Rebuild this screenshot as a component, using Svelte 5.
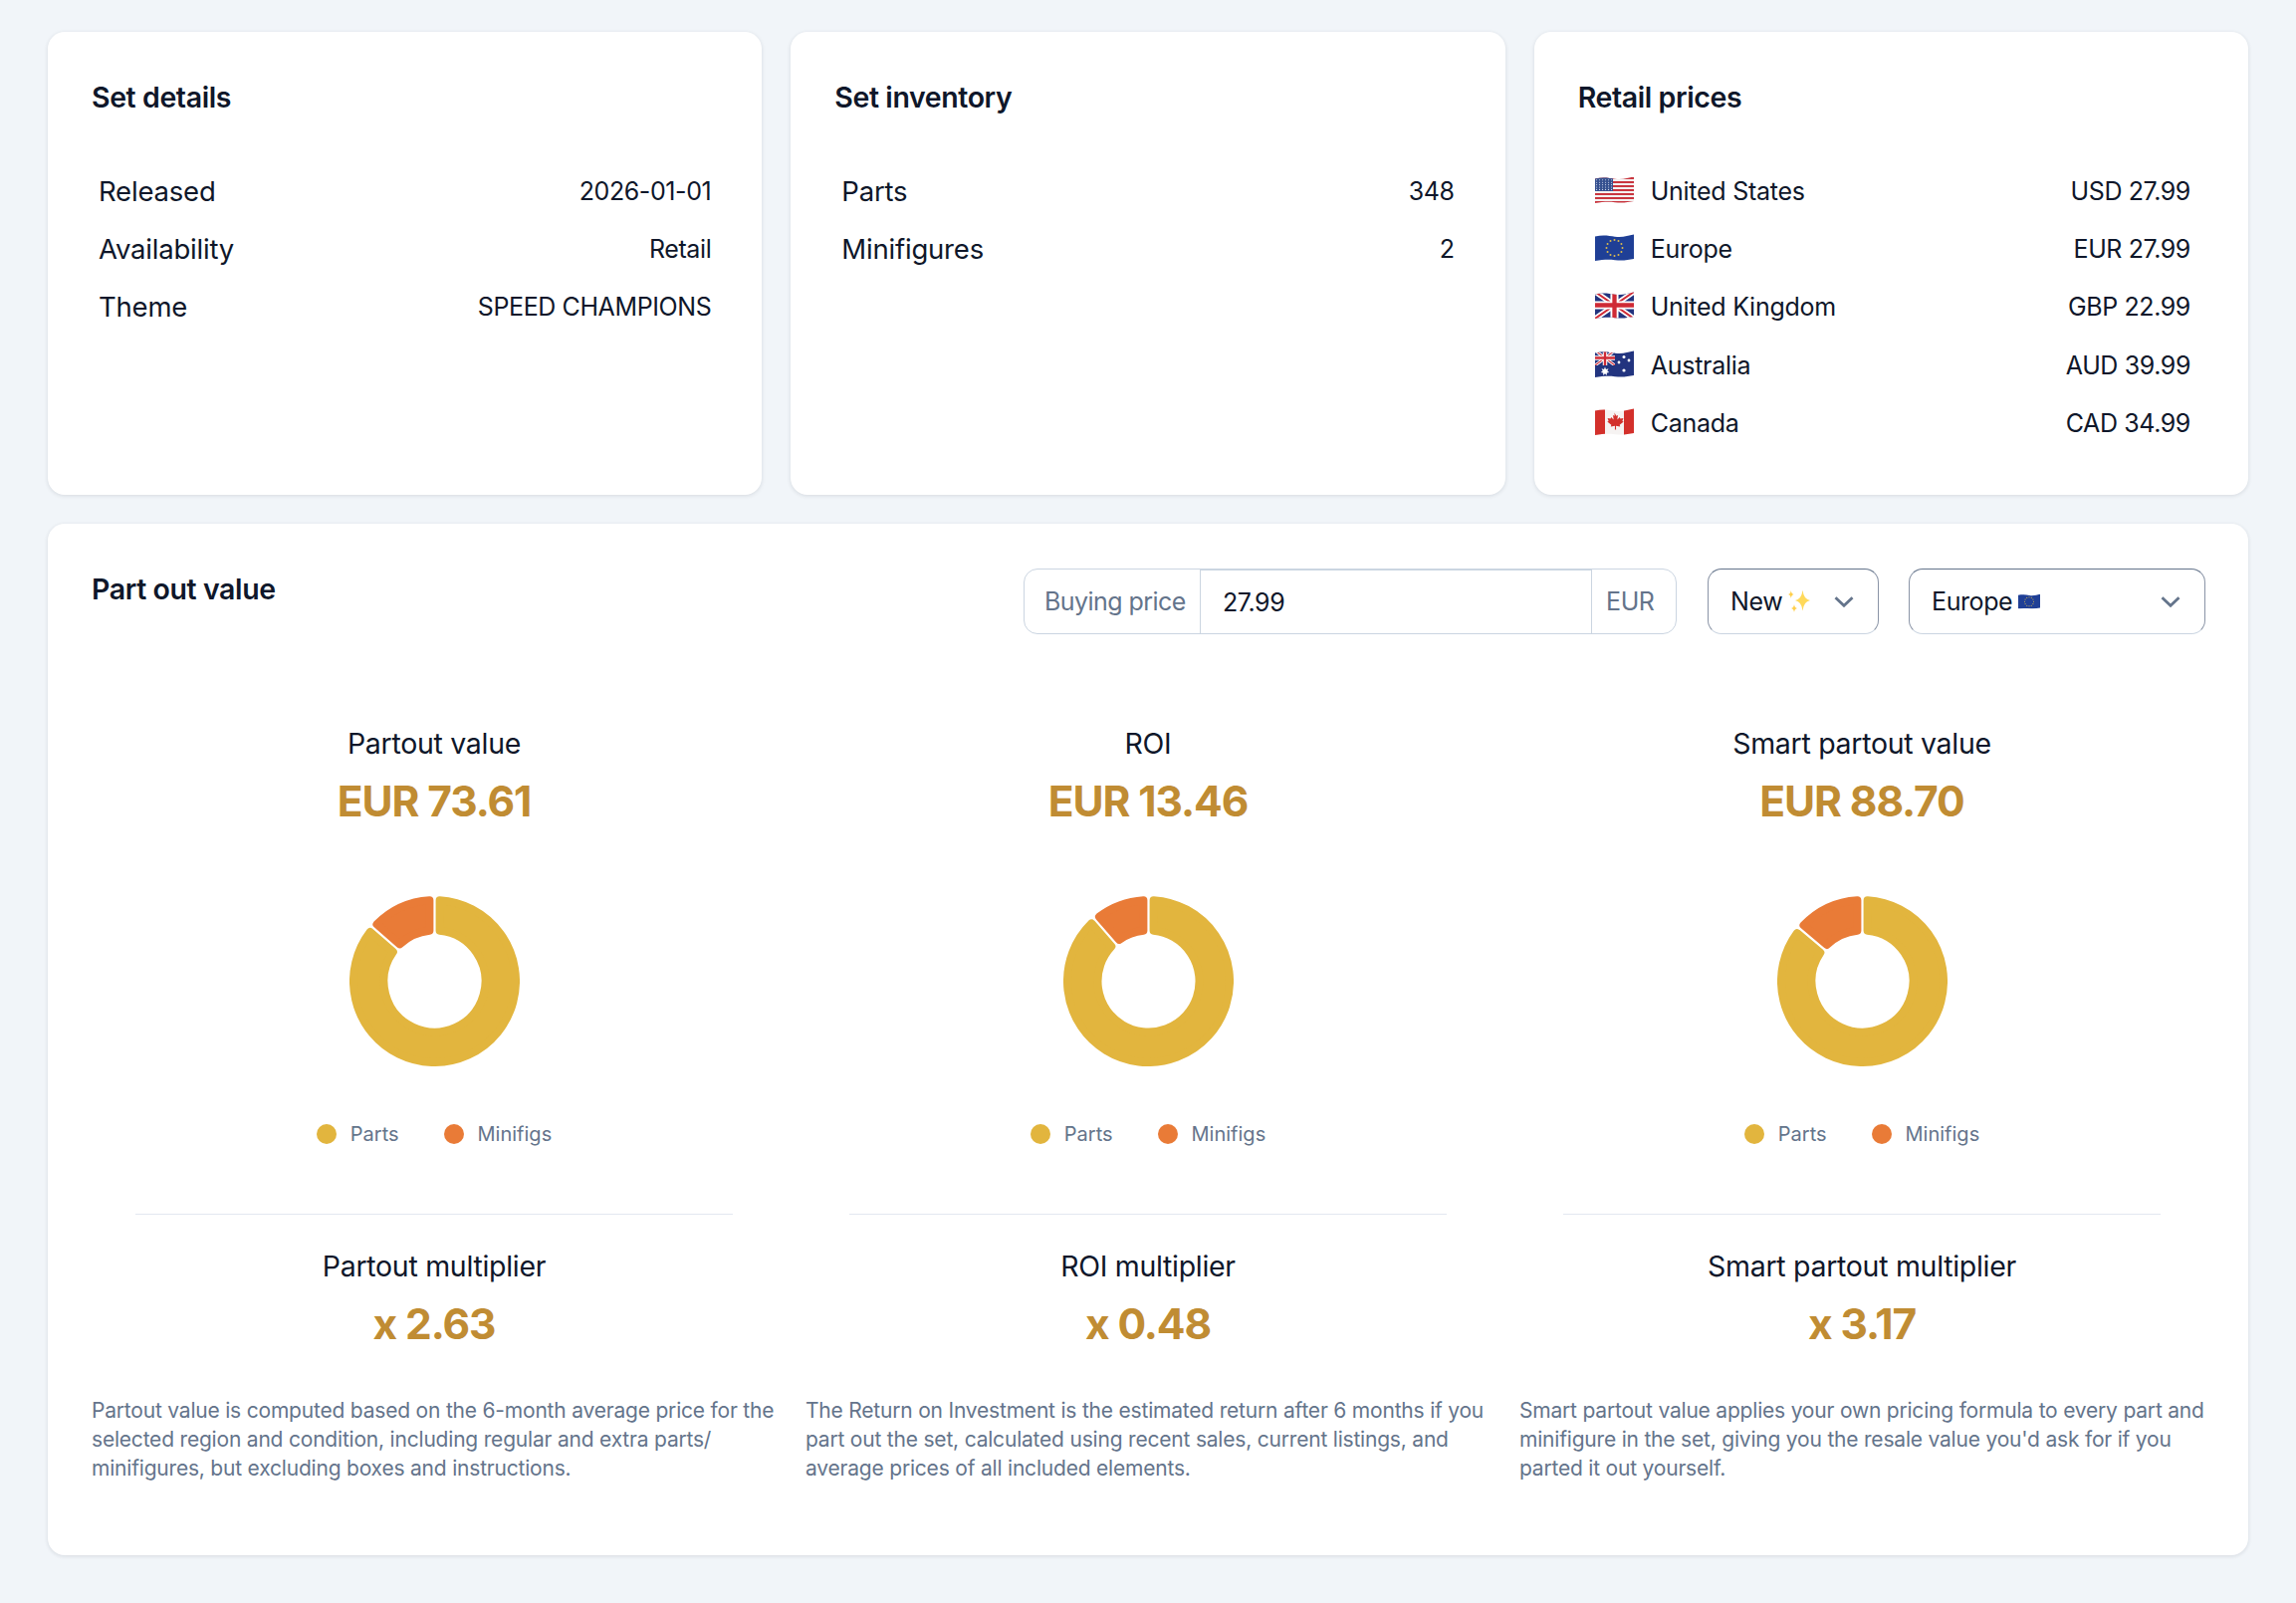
<script>
  const C = 85.5, R = 85.5, r = 47;
  function pt(rad, deg) {
    const a = (deg * Math.PI) / 180;
    return `${(C + rad * Math.sin(a)).toFixed(2)} ${(C - rad * Math.cos(a)).toFixed(2)}`;
  }
  // Sector from a0 to a1 (clockwise degrees from 12 o'clock), inset so that a round stroke restores its size and rounds its corners
  const radial = 4, side = 5.1;
  function sector(a0, a1) {
    const o = R - radial, i = r + radial;
    const d0o = a0 + (side / o) * 57.3, d1o = a1 - (side / o) * 57.3;
    const d0i = a0 + (side / i) * 57.3, d1i = a1 - (side / i) * 57.3;
    const large = a1 - a0 > 180 ? 1 : 0;
    return `M${pt(o, d0o)} A${o} ${o} 0 ${large} 1 ${pt(o, d1o)} L${pt(i, d1i)} A${i} ${i} 0 ${large} 0 ${pt(i, d0i)} Z`;
  }
  function star(cx, cy, rx, ry) {
    const kx = rx * 0.12, ky = ry * 0.12;
    return `M${cx} ${cy - ry}Q${cx + kx} ${cy - ky} ${cx + rx} ${cy}Q${cx + kx} ${cy + ky} ${cx} ${cy + ry}Q${cx - kx} ${cy + ky} ${cx - rx} ${cy}Q${cx - kx} ${cy - ky} ${cx} ${cy - ry}Z`;
  }
  const cols = [
    { title: 'Partout value', value: 'EUR 73.61', wedge: 49, mtitle: 'Partout multiplier', mvalue: 'x 2.63',
      desc: 'Partout value is computed based on the 6-month average price for the selected region and condition, including regular and extra parts/ minifigures, but excluding boxes and instructions.' },
    { title: 'ROI', value: 'EUR 13.46', wedge: 41, mtitle: 'ROI multiplier', mvalue: 'x 0.48',
      desc: 'The Return on Investment is the estimated return after 6 months if you part out the set, calculated using recent sales, current listings, and average prices of all included elements.' },
    { title: 'Smart partout value', value: 'EUR 88.70', wedge: 50, mtitle: 'Smart partout multiplier', mvalue: 'x 3.17',
      desc: "Smart partout value applies your own pricing formula to every part and minifigure in the set, giving you the resale value you'd ask for if you parted it out yourself." }
  ];
  const details = [['Released', '2026-01-01'], ['Availability', 'Retail'], ['Theme', 'SPEED CHAMPIONS']];
  const inventory = [['Parts', '348'], ['Minifigures', '2']];
  const prices = [
    ['us', 'United States', 'USD 27.99'],
    ['eu', 'Europe', 'EUR 27.99'],
    ['uk', 'United Kingdom', 'GBP 22.99'],
    ['au', 'Australia', 'AUD 39.99'],
    ['ca', 'Canada', 'CAD 34.99']
  ];
  const wave = 'M0 2.500C8 .8 14 1.800 20 2.800 28 4 33 1.500 39 .5V25C33 26 28 27.200 20 26.200 13 25.200 8 25.800 0 27Z';
  const euStars = Array.from({ length: 12 }, (_, i) => {
    const a = (i * Math.PI) / 6;
    return [19.5 + 8 * Math.sin(a), 14 - 8 * Math.cos(a)];
  });
  let uid = 0;
  function nextId() { uid += 1; return `flagclip${uid}`; }
</script>

{#snippet union(w, h)}
  <rect width={w} height={h} fill="#22347f" />
  <path d="M0 0L{w} {h}M{w} 0L0 {h}" stroke="#fff" stroke-width={h * 0.2} />
  <path d="M0 0L{w} {h}M{w} 0L0 {h}" stroke="#cf2a35" stroke-width={h * 0.07} />
  <path d="M{w / 2} 0V{h}M0 {h / 2}H{w}" stroke="#fff" stroke-width={h * 0.3} />
  <path d="M{w / 2} 0V{h}M0 {h / 2}H{w}" stroke="#cf2a35" stroke-width={h * 0.16} />
{/snippet}

{#snippet flag(code, cls)}
  {@const id = nextId()}
  <svg class={cls} viewBox="0 0 39 27" aria-hidden="true">
    <defs><clipPath {id}><path d={wave} /></clipPath></defs>
    <g clip-path="url(#{id})">
      {#if code === 'us'}
        <rect width="39" height="27" fill="#f4f1f1" />
        {#each [0, 1, 2, 3, 4, 5, 6] as s}
          <rect y={1 + s * 4} width="39" height="2" fill="#c9363f" />
        {/each}
        <rect width="18" height="15" fill="#35508f" />
        {#each [0, 1, 2, 3, 4] as row}
          {#each [0, 1, 2, 3, 4, 5] as c}
            <circle cx={1.6 + c * 3} cy={3.8 + row * 2.4} r="0.55" fill="#dfe4f2" />
          {/each}
        {/each}
      {:else if code === 'eu'}
        <rect width="39" height="27" fill="#1f3f96" />
        {#each euStars as s}
          <circle cx={s[0]} cy={s[1]} r="1" fill="#d9b94e" />
        {/each}
      {:else if code === 'uk'}
        {@render union(39, 27)}
      {:else if code === 'au'}
        <rect width="39" height="27" fill="#22347f" />
        <svg width="20" height="15">{@render union(20, 15)}</svg>
        <path d="M10 16.500l1 2.400 2.500-.7-1.200 2.300 2 1.500-2.500.5.1 2.500-1.900-1.700-1.900 1.700.1-2.500-2.500-.5 2-1.500-1.200-2.300 2.500.7z" fill="#fff" />
        <circle cx="29" cy="20" r="1.6" fill="#fff" />
        <circle cx="29" cy="6.500" r="1.500" fill="#fff" />
        <circle cx="24" cy="12" r="1.400" fill="#fff" />
        <circle cx="34" cy="10" r="1.400" fill="#fff" />
      {:else}
        <rect width="39" height="27" fill="#f6f3f2" />
        <rect width="10" height="27" fill="#d3302b" />
        <rect x="29" width="10" height="27" fill="#d3302b" />
        <path d="M19.500 4.500l1.800 3.200 1.700-.8-.7 4.600 2.500-2.600.6 1.600 3-.5-1 3 1.300.6-4 3.200.5 1.600-4.200-.6.100 3.700h-1.200l.1-3.700-4.200.6.5-1.600-4-3.200 1.300-.6-1-3 3 .5.6-1.600 2.500 2.600-.7-4.600 1.700.8z" fill="#d3302b" />
      {/if}
    </g>
  </svg>
{/snippet}

{#snippet chevron()}
  <svg class="chevron" viewBox="0 0 20 11" aria-hidden="true">
    <path d="M1.500 1.300L10 9.300l8.500-8" fill="none" stroke="#64748b" stroke-width="2.800" />
  </svg>
{/snippet}

{#snippet card(title, rows)}
  <section class="card">
    <h2>{title}</h2>
    <div class="rows">
      {#each rows as row}
        <div class="row">
          <span class="label">{row[0]}</span>
          <span class="val">{row[1]}</span>
        </div>
      {/each}
    </div>
  </section>
{/snippet}

<main>
  <div class="top">
    {@render card('Set details', details)}
    {@render card('Set inventory', inventory)}
    <section class="card">
      <h2>Retail prices</h2>
      <div class="rows prices">
        {#each prices as p}
          <div class="row">
            {@render flag(p[0], 'flag')}
            <span class="country">{p[1]}</span>
            <span class="val">{p[2]}</span>
          </div>
        {/each}
      </div>
    </section>
  </div>

  <section class="card partout">
    <header>
      <h2>Part out value</h2>
      <div class="controls">
        <div class="group">
          <span class="addon first">Buying price</span>
          <input value="27.99" aria-label="Buying price" />
          <span class="addon last">EUR</span>
        </div>
        <div class="select new">
          <span class="sel-text">New
            <svg class="sparkles" viewBox="0 0 22 22" aria-hidden="true">
              <path d={star(14.500, 10, 7.500, 10.500)} fill="#ffd95a" />
              <path d={star(2.800, 4, 2.800, 4)} fill="#ffcf4a" />
              <path d={star(6, 18, 3, 4)} fill="#ffcf4a" />
            </svg>
          </span>
          {@render chevron()}
        </div>
        <div class="select region">
          <span class="sel-text">Europe {@render flag('eu', 'miniflag')}</span>
          {@render chevron()}
        </div>
      </div>
    </header>

    <div class="cols">
      {#each cols as col}
        <div class="col">
          <h3>{col.title}</h3>
          <div class="big">{col.value}</div>
          <svg class="donut" viewBox="0 0 171 171" aria-hidden="true">
            <path d={sector(0, 360 - col.wedge)} fill="#e2b53e" stroke="#e2b53e" stroke-width="8" stroke-linejoin="round" />
            <path d={sector(360 - col.wedge, 360)} fill="#e97b37" stroke="#e97b37" stroke-width="8" stroke-linejoin="round" />
          </svg>
          <div class="legend">
            <span class="item"><i class="dot parts"></i>Parts</span>
            <span class="item"><i class="dot figs"></i>Minifigs</span>
          </div>
          <hr />
          <h3>{col.mtitle}</h3>
          <div class="big">{col.mvalue}</div>
          <p>{col.desc}</p>
        </div>
      {/each}
    </div>
  </section>
</main>

<style>
  :global(body) {
    margin: 0;
    background: #f1f5f9;
  }
  main {
    box-sizing: border-box;
    min-height: 1610px;
    padding: 32px 48px 48px;
    display: flex;
    flex-direction: column;
    gap: 29px;
    font-family: Inter, "Noto Sans", sans-serif;
    color: #0f172a;
  }
  .top {
    display: grid;
    grid-template-columns: repeat(3, 1fr);
    gap: 29px;
  }
  .card {
    background: #fff;
    border-radius: 17px;
    box-shadow: 0 1px 4px rgba(15, 23, 42, 0.12);
    padding: 44px;
    box-sizing: border-box;
  }
  .top .card {
    height: 465px;
  }
  h2 {
    margin: 0;
    font-size: 28.5px;
    line-height: 43px;
    font-weight: 600;
    letter-spacing: -0.4px;
  }
  .rows {
    margin-top: 43.5px;
    display: flex;
    flex-direction: column;
  }
  .row {
    height: 58.4px;
    display: flex;
    align-items: center;
    padding: 0 7px;
  }
  .label {
    font-size: 27.5px;
    flex: 1;
    letter-spacing: -0.2px;
  }
  .val {
    font-size: 25px;
    letter-spacing: -0.4px;
  }
  .prices .row {
    padding: 0 14px 0 17px;
  }
  .flag {
    width: 39px;
    height: 27px;
    flex: none;
    margin-bottom: 3px;
    margin-right: 17px;
  }
  .country {
    flex: 1;
    font-size: 25px;
    letter-spacing: -0.25px;
  }
  .partout {
    height: 1036px;
  }
  header {
    display: flex;
    justify-content: space-between;
    align-items: flex-start;
  }
  .controls {
    display: flex;
    gap: 30px;
    margin-top: 1px;
    margin-right: -1px;
    height: 66px;
  }
  .group {
    width: 656px;
    margin-right: 1px;
    display: flex;
    box-sizing: border-box;
    border: 1px solid #cbd5e1;
    border-radius: 14px;
    font-size: 25px;
    letter-spacing: -0.4px;
  }
  .addon {
    display: flex;
    align-items: center;
    color: #64748b;
    box-sizing: border-box;
  }
  .first {
    width: 177px;
    padding-left: 20px;
    border-right: 1px solid #cbd5e1;
    letter-spacing: -0.55px;
  }
  .last {
    width: 85px;
    padding-left: 14px;
    border-left: 1px solid #cbd5e1;
  }
  input {
    flex: 1;
    min-width: 0;
    border: 0;
    border-top: 2px solid #cbd5e1;
    margin-top: -1px;
    outline: none;
    background: transparent;
    padding: 0 22px;
    font: inherit;
    letter-spacing: inherit;
    color: #0f172a;
  }
  .select {
    box-sizing: border-box;
    display: flex;
    align-items: center;
    justify-content: space-between;
    border: 1px solid #8a94a6;
    border-top-color: #64748b;
    border-bottom-color: #cbd5e1;
    border-radius: 14px;
    padding: 0 24px 0 22px;
    font-size: 25px;
    letter-spacing: -0.4px;
  }
  .new {
    width: 172px;
  }
  .region {
    width: 298px;
  }
  .sel-text {
    display: flex;
    align-items: center;
    gap: 6px;
  }
  .sparkles {
    width: 22px;
    height: 22px;
  }
  .miniflag {
    width: 22px;
    height: 16px;
  }
  .chevron {
    width: 20px;
    height: 11px;
    flex: none;
  }
  .cols {
    margin-top: 90px;
    display: grid;
    grid-template-columns: repeat(3, 1fr);
    gap: 29px;
  }
  .col {
    display: flex;
    flex-direction: column;
    align-items: center;
  }
  h3 {
    margin: 0;
    font-size: 28.5px;
    line-height: 40px;
    font-weight: 400;
    letter-spacing: -0.3px;
    color: #0f172a;
  }
  .big {
    margin-top: 8px;
    font-size: 42.5px;
    line-height: 60px;
    font-weight: 650;
    color: #c08c33;
    letter-spacing: -1.1px;
  }
  .donut {
    width: 171px;
    height: 171px;
    margin-top: 65px;
  }
  .legend {
    display: flex;
    gap: 45px;
    margin-top: 53px;
    height: 30px;
    font-size: 20px;
    color: #64748b;
  }
  .item {
    display: flex;
    align-items: center;
    gap: 14px;
  }
  .dot {
    width: 20px;
    height: 20px;
    border-radius: 50%;
  }
  .parts {
    background: #e2b53e;
  }
  .figs {
    background: #e97b37;
  }
  hr {
    width: 600px;
    border: 0;
    border-top: 1px solid #e2e8f0;
    margin: 65px 0 32px;
  }
  p {
    margin: 42px 0 0;
    align-self: stretch;
    font-size: 21px;
    line-height: 29px;
    color: #64748b;
    letter-spacing: -0.2px;
  }
</style>
